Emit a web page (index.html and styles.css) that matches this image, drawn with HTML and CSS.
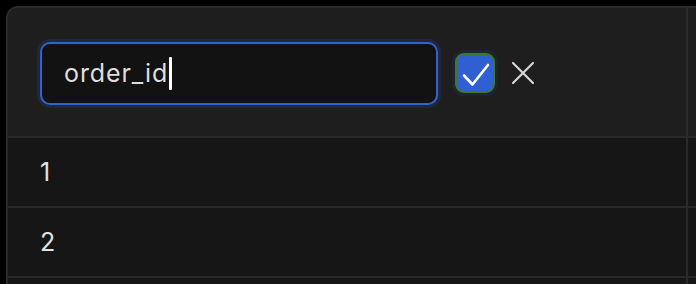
FILE: index.html
```html
<!DOCTYPE html>
<html lang="en">

<head>
    <meta charset="UTF-8">
    <title>Column rename</title>
    <link rel="stylesheet" href="styles.css">
</head>

<body>
    <div class="panel">
        <div class="row header">
            <div class="cell">
                <div class="name-input">
                    <span class="value">order_id</span><span class="caret"></span>
                </div>
                <button class="confirm" type="button" aria-label="Save">
                    <svg width="36" height="36" viewBox="0 0 36 36">
                        <path d="M7 20.5 L15.5 29.5 L31 10" fill="none" stroke="#fff" stroke-width="2.6" stroke-linecap="round" stroke-linejoin="round"/>
                    </svg>
                </button>
                <button class="cancel" type="button" aria-label="Cancel">
                    <svg width="24" height="24" viewBox="0 0 24 24">
                        <path d="M2 2 L22 22 M22 2 L2 22" fill="none" stroke="#d6d6d6" stroke-width="2.2" stroke-linecap="round"/>
                    </svg>
                </button>
            </div>
            <div class="cell rest"></div>
        </div>
        <div class="row">
            <div class="cell">1</div>
            <div class="cell rest"></div>
        </div>
        <div class="row">
            <div class="cell">2</div>
            <div class="cell rest"></div>
        </div>
        <div class="row">
            <div class="cell"></div>
            <div class="cell rest"></div>
        </div>
    </div>
</body>

</html>
```

FILE: styles.css
```css
body {
    margin: 0;
    background-color: #000;
    font-family: Inter, "Noto Sans", sans-serif;
    overflow: hidden;
}

.panel {
    margin: 6px 0 0 6px;
    width: 690px;
    height: 278px;
    box-sizing: border-box;
    border-top: 2px solid #2a2a2a;
    border-left: 2px solid #2a2a2a;
    border-radius: 12px 0 0 0;
    background-color: #161616;
    overflow: hidden;
}

.row {
    display: flex;
    height: 68px;
    border-bottom: 2px solid #2a2a2a;
}

.cell {
    width: 680px;
    flex-shrink: 0;
    display: flex;
    align-items: center;
    padding-left: 32px;
    box-sizing: border-box;
    border-right: 2px solid #2a2a2a;
    color: #e2e2e2;
    font-size: 25px;
    letter-spacing: 0.4px;
}

.cell.rest {
    flex: 1;
    width: auto;
    border-right: none;
}

.header {
    height: 128px;
    background-color: #1e1e1e;
}

.header .cell {
    padding-top: 2px;
}

.name-input {
    width: 398px;
    height: 63px;
    box-sizing: border-box;
    border: 2px solid #2f62d4;
    border-radius: 10px;
    box-shadow: 0 0 0 3px rgba(47, 98, 212, 0.14);
    background-color: #121212;
    display: flex;
    align-items: center;
    padding-left: 22px;
    color: #dedede;
    font-size: 25px;
    letter-spacing: 0.9px;
}

.caret {
    display: inline-block;
    width: 3px;
    height: 33px;
    margin-left: 1px;
    background-color: #fff;
    border-radius: 1px;
}

.confirm {
    width: 40px;
    height: 40px;
    margin-left: 17px;
    padding: 0;
    border: 2px solid #3b7a27;
    border-radius: 9px;
    background-color: #2f5fd3;
    display: flex;
    align-items: center;
    justify-content: center;
    box-shadow: 0 0 0 3px rgba(47, 98, 212, 0.1);
}

.cancel {
    margin-left: 16px;
    padding: 0;
    border: none;
    background: none;
    display: flex;
}
```
